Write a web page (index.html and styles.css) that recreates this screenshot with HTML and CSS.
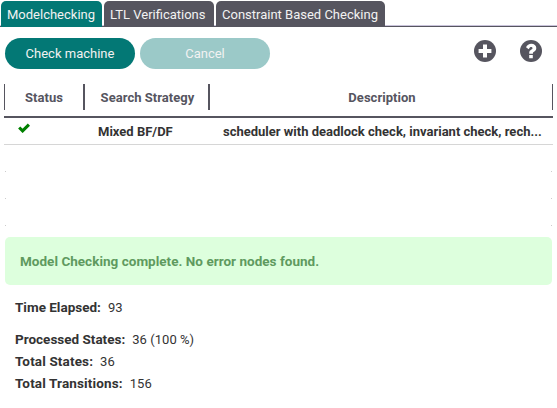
FILE: index.html
```html
<!DOCTYPE html>
<html lang="en">
<head>
<meta charset="utf-8">
<title>Modelchecking</title>
<link rel="stylesheet" href="styles.css">
</head>
<body>
<nav class="tabs">
  <div class="tab tab-active">Modelchecking</div>
  <div class="tab">LTL Verifications</div>
  <div class="tab">Constraint Based Checking</div>
</nav>
<div class="toolbar">
  <button class="btn">Check machine</button>
  <button class="btn btn-disabled">Cancel</button>
  <div class="icons">
    <svg class="icon" viewBox="0 0 22 22"><circle cx="11" cy="11" r="11"/><path class="cut" d="M9 4.600h4v4.400h4.400v4H13v4.400H9V13H4.600V9H9z"/></svg>
    <svg class="icon" viewBox="0 0 22 22"><circle cx="11" cy="11" r="11"/><path class="cut" d="M9.200 15h3.600v3.300H9.200zM6 7.300C7.100 5 8.900 3.800 11.300 3.800c2.900 0 5 1.800 5 4.300 0 1.800-.9 2.800-2.200 3.600-.9.500-1.200.8-1.200 1.500v.6H9.200V13c0-1.800.9-2.700 2.200-3.500.8-.5 1.100-.8 1.100-1.300 0-.7-.6-1.100-1.400-1.100-.9 0-1.500.6-2.400 2.100z"/></svg>
  </div>
</div>
<section class="table">
  <div class="row head">
    <div class="cell">Status</div>
    <div class="cell">Search Strategy</div>
    <div class="cell">Description</div>
  </div>
  <div class="row item">
    <div class="cell status"><svg class="check" viewBox="0 0 12 10"><path d="M1.200 4.500 4.600 7.900 10.900 1.600"/></svg></div>
    <div class="cell strategy">Mixed BF/DF</div>
    <div class="cell desc">scheduler with deadlock check, invariant check, rech...</div>
  </div>
  <div class="empty"></div>
  <div class="empty"></div>
  <div class="empty"></div>
</section>
<div class="result">Model Checking complete. No error nodes found.</div>
<dl class="stats">
  <div class="stat stat-time"><dt>Time Elapsed:</dt><dd>93</dd></div>
  <div class="stat"><dt>Processed States:</dt><dd>36 (100 %)</dd></div>
  <div class="stat"><dt class="wide">Total States:</dt><dd>36</dd></div>
  <div class="stat"><dt class="wide">Total Transitions:</dt><dd>156</dd></div>
</dl>
</body>
</html>
```
FILE: styles.css
```css
* { box-sizing: border-box; }
body {
  margin: 0;
  width: 557px;
  height: 408px;
  overflow: hidden;
  background: #fff;
  color: #333;
  font: 13px/16px Roboto, sans-serif;
}
.tabs {
  display: flex;
  gap: 2px;
  height: 27px;
  padding: 1px 1px 0;
  border-bottom: 1px solid #56555f;
  box-shadow: inset 0 -1px #c9c3da;
}
.tab {
  height: 26px;
  padding: 6px 0 0 6px;
  border-radius: 5px 5px 0 0;
  background: #56555f;
  color: #f2f2f2;
  white-space: nowrap;
  width: 110px;
}
.tab-active { background: #037875; width: 101px; }
.tab:last-child { width: 169px; }
.toolbar {
  display: flex;
  gap: 5px;
  height: 57px;
  padding: 11px 15px 0 5px;
}
.btn {
  width: 130px;
  height: 31px;
  padding: 0;
  border: 0;
  border-radius: 16px;
  background: #037875;
  color: #f2f2f2;
  font: inherit;
}
.btn-disabled { background: #9bc9c8; }
.icons { display: flex; gap: 24px; margin: 1.500px 0 0 auto; }
.icon { width: 22px; height: 22px; fill: #56555f; }
.cut { fill: #fff; }
.table { margin: 0 4px; width: 549px; height: 153px; font-weight: 700; }
.row { display: grid; grid-template-columns: 81px 125px 343px; white-space: nowrap; }
.head {
  height: 34px;
  border-bottom: 2px solid #56555f;
  color: #56555f;
  text-align: center;
  letter-spacing: .04px;
}
.head .cell { height: 26px; padding: 6px 0 0 2px; border-right: 2px solid #56555f; }
.head .cell:first-child { padding-left: 0; border-left: 1px solid #56555f; }
.head .cell:last-child { border-right-width: 1px; }
.item { height: 27px; border-bottom: 1px solid #d6d6d6; }
.status { padding: 5px 0 0 14px; }
.check { display: block; width: 12px; height: 10px; fill: none; stroke: #008000; stroke-width: 3.1; }
.strategy { padding: 6px 0 0 13px; }
.desc { padding: 6px 0 0 13px; }
.empty {
  height: 27px;
  margin: 0 1px;
  background: linear-gradient(#ccc, #ccc) left bottom / 1px 1px no-repeat, linear-gradient(#ccc, #ccc) right bottom / 1px 1px no-repeat;
}
.result {
  width: 547px;
  height: 48px;
  margin-left: 5px;
  padding: 16px 15px;
  border-radius: 5px;
  background: #dfd;
  color: #5f9a5f;
  font-size: 13.500px;
  font-weight: 700;
  letter-spacing: .02px;
}
.stats { margin: 14px 15px 0; }
.stat { display: flex; align-items: baseline; gap: 7px; height: 22px; white-space: nowrap; }
.stat-time { height: 32px; }
dt { font-size: 13.500px; font-weight: 700; }
.wide { letter-spacing: .14px; }
dd { margin: 0; letter-spacing: .05px; }
```
